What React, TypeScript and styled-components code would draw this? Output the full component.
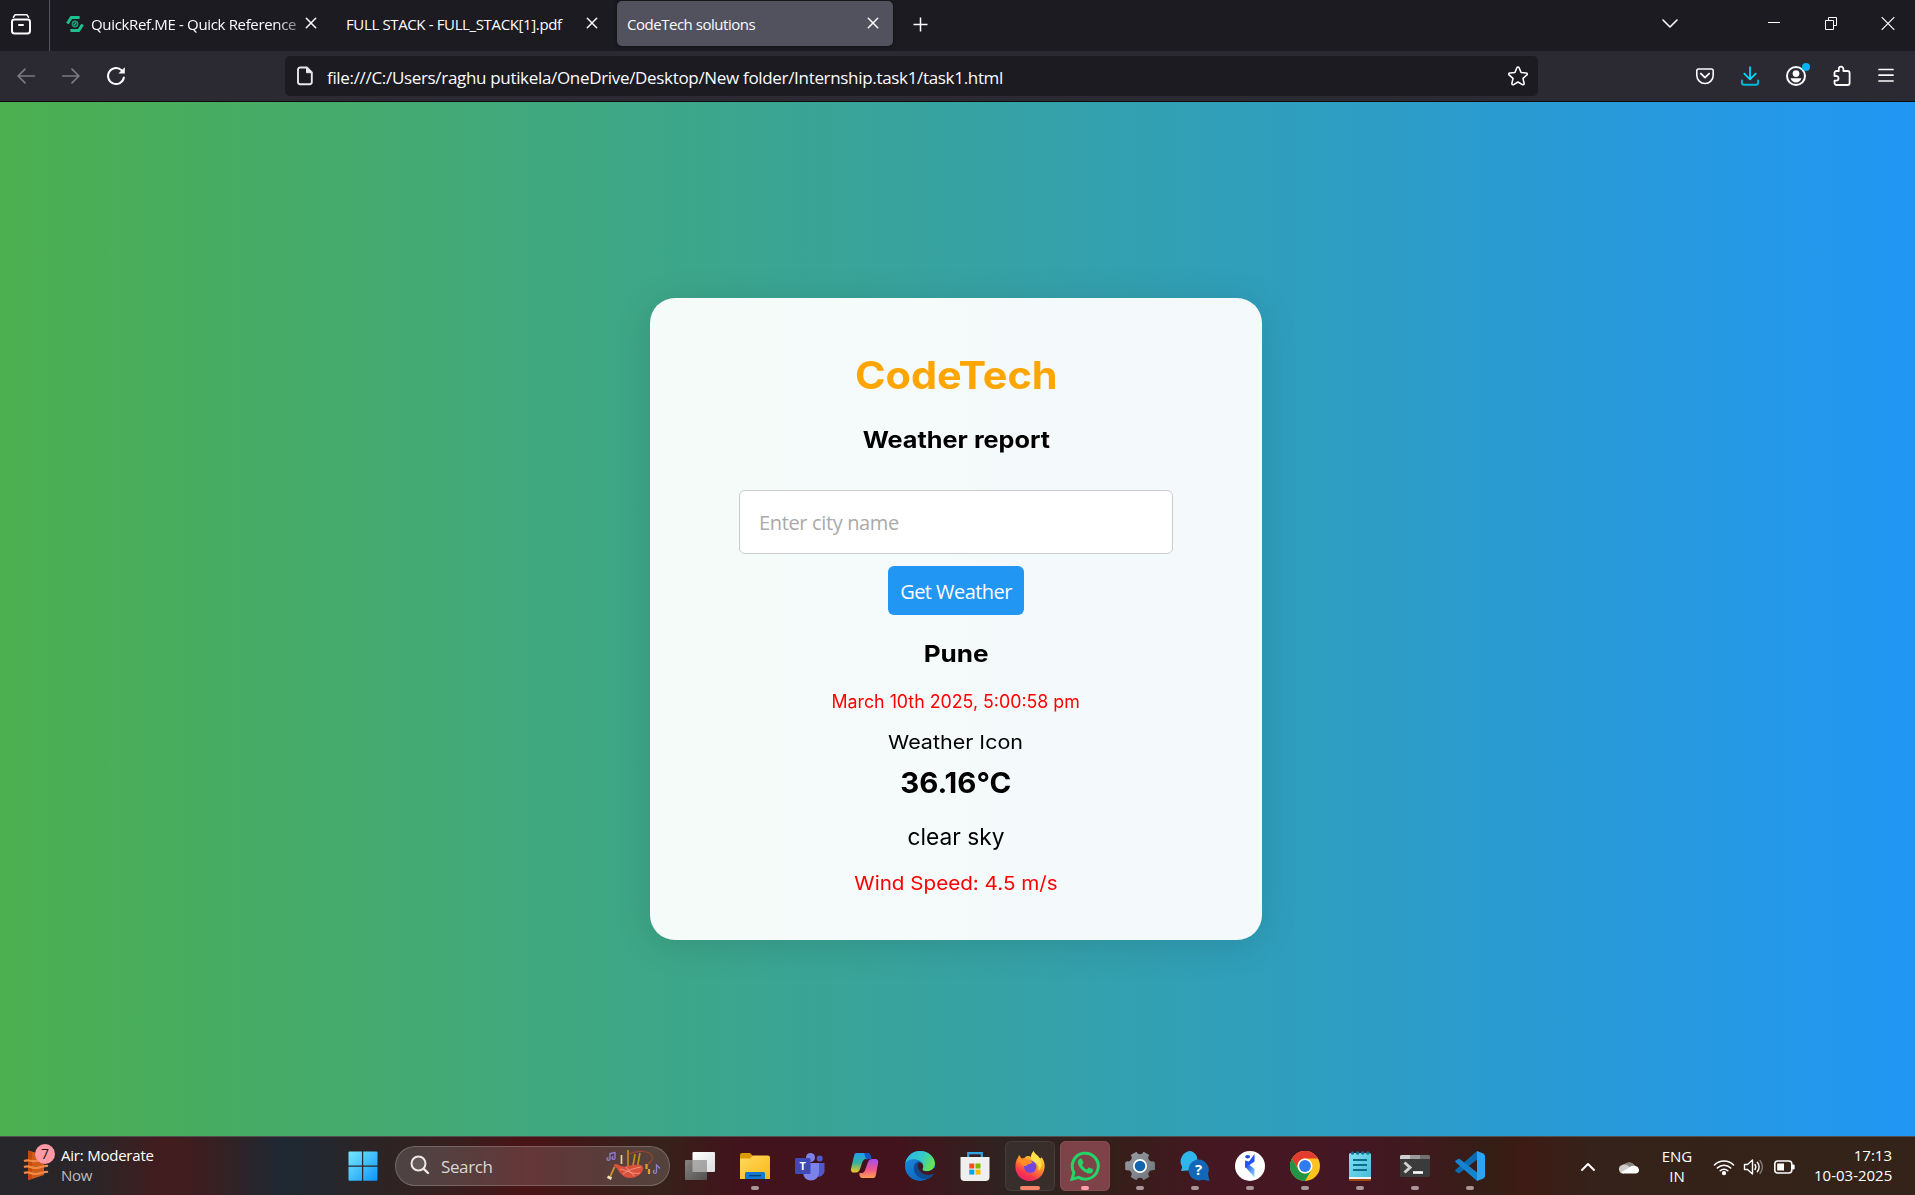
import React from 'react';
import styled, { createGlobalStyle } from 'styled-components';

const GlobalStyle = createGlobalStyle`
  * { box-sizing: border-box; }
  html, body { margin: 0; padding: 0; overflow: hidden; }
  body { font-family: "Open Sans", "Noto Sans", sans-serif; }
  svg { display: block; flex: none; }
  button { font: inherit; border: 0; padding: 0; background: none; color: inherit; }
`;

const Screen = styled.div`
  width: 1915px;
  height: 1195px;
  display: flex;
  flex-direction: column;
  background: #1c1b22;
`;

/* ---------- Browser: tab strip ---------- */

const TabStrip = styled.header`
  height: 51px;
  flex: none;
  display: flex;
  align-items: stretch;
  background: #1c1b22;
  color: #fbfbfe;
`;

const FirefoxView = styled.button`
  width: 50px;
  border-right: 1px solid #54535b;
  padding: 0 0 3px 10px;
`;

const Tab = styled.div<{ $active?: boolean; $width: number; $pad: number; $end?: number }>`
  width: ${(p) => p.$width}px;
  height: 45px;
  margin-top: 1px;
  padding: 0 ${(p) => p.$end ?? 13}px 0 ${(p) => p.$pad}px;
  display: flex;
  align-items: center;
  border-radius: 5px;
  background: ${(p) => (p.$active ? '#52525e' : 'transparent')};
  box-shadow: ${(p) => (p.$active ? '0 0 4px rgba(0, 0, 0, 0.5)' : 'none')};
`;

const TabLabel = styled.span<{ $spacing: number; $fade?: boolean }>`
  flex: 1;
  min-width: 0;
  white-space: nowrap;
  font-size: 15px;
  line-height: 24px;
  letter-spacing: ${(p) => p.$spacing}px;
  mask-image: ${(p) =>
    p.$fade ? 'linear-gradient(90deg, #000 87%, rgba(0,0,0,.35) 98%, transparent)' : 'none'};
`;

const Favicon = styled.span`
  margin-right: 7px;
`;

const CloseTab = styled.button`
  width: 14px;
  height: 14px;
  margin-bottom: 1px;
`;

const NewTab = styled.button`
  margin: 17px 0 0 20px;
  width: 15px;
  height: 15px;
`;

const WindowControls = styled.div`
  margin-left: auto;
  display: flex;
  align-items: flex-start;
  padding: 16px 20px 0 0;
`;

const WindowButton = styled.button<{ $gap: number }>`
  margin-left: ${(p) => p.$gap}px;
`;

/* ---------- Browser: navigation bar ---------- */

const NavBar = styled.nav`
  height: 51px;
  flex: none;
  display: flex;
  align-items: center;
  padding-left: 16px;
  background: #2b2a33;
  border-bottom: 1px solid #0c0c0d;
  color: #fbfbfe;
`;

const NavButtons = styled.div`
  width: 269px;
  display: flex;
  gap: 25px;
`;

const NavButton = styled.button<{ $disabled?: boolean }>`
  color: ${(p) => (p.$disabled ? '#7b7a82' : '#fbfbfe')};
`;

const UrlBar = styled.div`
  width: 1253px;
  height: 40px;
  display: flex;
  align-items: center;
  padding: 0 9px 0 12px;
  border-radius: 5px;
  background: #1c1b22;
`;

const Url = styled.span`
  margin-left: 14px;
  flex: 1;
  white-space: nowrap;
  font-size: 17px;
  line-height: 26px;
  letter-spacing: -0.322px;
  padding-top: 3px;
`;

const Extensions = styled.div`
  flex: 1;
  display: flex;
  justify-content: flex-end;
  gap: 25px;
  padding-right: 20px;
`;

const AccountButton = styled.button`
  position: relative;
`;

const AccountDot = styled.span`
  position: absolute;
  top: -2px;
  right: -3px;
  width: 8px;
  height: 8px;
  border-radius: 50%;
  background: #00b3f4;
`;

/* ---------- Page ---------- */

const Page = styled.main`
  flex: 1;
  min-height: 0;
  display: flex;
  align-items: center;
  justify-content: center;
  padding-right: 3px;
  background: linear-gradient(to right, #4caf50, #2196f3);
`;

const Card = styled.section`
  width: 612px;
  height: 642px;
  padding-top: 53px;
  display: flex;
  flex-direction: column;
  align-items: center;
  border-radius: 25px;
  background: rgba(255, 255, 255, 0.95);
  box-shadow: 0 5px 38px rgba(0, 0, 0, 0.12);
`;

const Line = styled.p<{
  $size: number;
  $height: number;
  $top?: number;
  $stretch?: number;
  $color?: string;
  $bold?: boolean;
}>`
  margin: ${(p) => p.$top ?? 0}px 0 0;
  font-family: Inter, 'Open Sans', sans-serif;
  font-size: ${(p) => p.$size}px;
  line-height: ${(p) => p.$height}px;
  color: ${(p) => p.$color ?? '#000'};
  font-weight: ${(p) => (p.$bold ? 700 : 400)};
  white-space: nowrap;
  transform: scaleX(${(p) => p.$stretch ?? 1});
`;

const CityInput = styled.input`
  width: 434px;
  height: 64px;
  margin-top: 35px;
  padding: 0 19px;
  border: 1px solid #ccc;
  border-radius: 6px;
  background: #fff;
  font-family: 'Open Sans', sans-serif;
  font-size: 20px;
  letter-spacing: -0.355px;
  &::placeholder { color: #aaa; opacity: 1; }
`;

const WeatherButton = styled.button`
  width: 136px;
  height: 49px;
  margin-top: 12px;
  padding-top: 2px;
  border-radius: 6px;
  background: #2196f3;
  color: #fff;
  font-size: 20px;
  letter-spacing: -0.553px;
  white-space: nowrap;
`;

/* ---------- Taskbar ---------- */

const Taskbar = styled.footer`
  height: 59px;
  flex: none;
  display: flex;
  align-items: stretch;
  border-top: 1px solid #554f50;
  color: #fff;
  background: linear-gradient(
    90deg,
    #26262b 0, #2a2528 90px, #431c1e 165px, #3c1e20 200px, #1e2933 285px, #2a2527 360px,
    #35201f 440px, #4a1416 530px, #3e1a18 590px, #36221a 660px, #42131c 740px, #42131c 900px,
    #33201f 980px, #2c2421 1020px, #351f1a 1110px, #451722 1215px, #441724 1350px, #3e1a1d 1430px,
    #341e15 1490px, #3e1b15 1525px, #35221a 1590px, #332318 100%
  );
`;

const Widget = styled.div`
  width: 340px;
  display: flex;
  padding: 6px 0 0 23px;
`;

const WidgetIcon = styled.div`
  position: relative;
  width: 38px;
  height: 46px;
  padding-top: 6px;
`;

const Badge = styled.span`
  position: absolute;
  left: 12px;
  top: 1px;
  width: 20px;
  height: 20px;
  border-radius: 50%;
  background: #ff99a4;
  color: #1a1a1a;
  font-size: 14px;
  line-height: 20px;
  text-align: center;
`;

const WidgetText = styled.div`
  display: flex;
  flex-direction: column;
  padding-top: 2px;
  font-size: 15px;
  line-height: 20px;
  letter-spacing: -0.222px;
`;

const Muted = styled.span`
  color: #c3bcbd;
`;

const StartButton = styled.button`
  width: 55px;
  padding: 0 0 0 8px;
  display: flex;
  align-items: center;
`;

const SearchBox = styled.div`
  width: 275px;
  height: 40px;
  margin: 9px 2px 0 0;
  padding: 0 7px 2px 14px;
  display: flex;
  align-items: center;
  border: 1px solid rgba(255, 255, 255, 0.2);
  border-radius: 20px;
  background: rgba(255, 255, 255, 0.15);
`;

const SearchLabel = styled.span`
  flex: 1;
  margin-left: 11px;
  padding-top: 3px;
  font-size: 17px;
  line-height: 24px;
  letter-spacing: -0.381px;
  color: #ded5d6;
`;

const Apps = styled.div`
  display: flex;
`;

const AppSlot = styled.button<{ $fill?: string; $edge?: string }>`
  width: 50px;
  height: 50px;
  margin: 4px 2px 0 3px;
  padding-top: 10px;
  display: flex;
  flex-direction: column;
  align-items: center;
  gap: 5px;
  border-radius: 6px;
  background: ${(p) => p.$fill ?? 'transparent'};
  box-shadow: inset 0 0 0 1px ${(p) => p.$edge ?? 'transparent'};
`;

const Indicator = styled.span<{ $width: number; $color: string }>`
  width: ${(p) => p.$width}px;
  height: 4px;
  border-radius: 2px;
  background: ${(p) => p.$color};
`;

const Tray = styled.div`
  margin-left: auto;
  display: flex;
  align-items: center;
  padding: 0 23px 2px 0;
`;

const TrayIcon = styled.span<{ $gap: number }>`
  margin-right: ${(p) => p.$gap}px;
  padding-top: 3px;
`;

const TrayText = styled.div<{ $align: string; $width: number; $gap: number; $bottom?: number }>`
  width: ${(p) => p.$width}px;
  margin-right: ${(p) => p.$gap}px;
  display: flex;
  flex-direction: column;
  font-size: 15px;
  line-height: 20px;
  text-align: ${(p) => p.$align};
  white-space: nowrap;
  padding: 1px 0 ${(p) => p.$bottom ?? 0}px;
`;

/* ---------- Icons ---------- */

const CloseIcon = () => (
  <svg width="14" height="14" viewBox="0 0 14 14" stroke="#fbfbfe" strokeWidth="1.5">
    <path d="M2.3 2.3 11.7 11.7M11.7 2.3 2.3 11.7" strokeLinecap="round" />
  </svg>
);

const ViewIcon = () => (
  <svg width="22" height="22" viewBox="0 0 22 22" fill="none" stroke="#fbfbfe" strokeLinecap="round">
    <path d="M5.2 1.7h11.6M3.5 4.2 5 1.8M18.5 4.2 17 1.8" strokeWidth="1.6" />
    <rect x="2" y="6.5" width="18" height="14" rx="2.4" strokeWidth="2" />
    <path d="M9 12h4" strokeWidth="2" />
  </svg>
);

const QuickRefIcon = () => (
  <svg width="18" height="18" viewBox="0 0 18 18" fill="none" stroke="#1fc08e">
    <path d="M1.4 8.500 5.300 2.400h8.300M16.600 9.500l-3.900 6.100H4.400" strokeWidth="3" />
    <circle cx="9" cy="9" r="2.600" strokeWidth="1.600" opacity=".75" />
    <path d="m8 10 2-2" strokeWidth="1.200" />
  </svg>
);

const BackIcon = ({ flip }: { flip?: boolean }) => (
  <svg width="20" height="20" viewBox="0 0 20 20" fill="none" stroke="currentColor" strokeWidth="1.7" strokeLinecap="round" strokeLinejoin="round">
    {flip ? <path d="M1.8 10h16M11 3.2 17.9 10 11 16.8" /> : <path d="M18.2 10h-16M9 3.2 2.1 10 9 16.8" />}
  </svg>
);

const ReloadIcon = () => (
  <svg width="20" height="20" viewBox="0 0 20 20" fill="none" stroke="currentColor" strokeWidth="2" strokeLinecap="round">
    <path d="M17.9 11.5A8 8 0 1 1 15.8 4.4" />
    <path d="M18.8 1.2v6.4h-6.4z" fill="currentColor" stroke="none" />
  </svg>
);

const FileIcon = () => (
  <svg width="16" height="20" viewBox="0 0 16 20" fill="none" stroke="#e8e8ec" strokeWidth="1.9" strokeLinejoin="round">
    <path d="M3.2 1.5h6.6l5 5V16a2.2 2.2 0 0 1-2.2 2.2H3.2A2.2 2.2 0 0 1 1 16V3.700a2.200 2.200 0 0 1 2.200-2.200z" />
    <path d="M9.500 1.500v5.200h5.300z" fill="#e8e8ec" strokeWidth="1" />
  </svg>
);

const StarIcon = () => (
  <svg width="22" height="22" viewBox="0 0 22 22" fill="none" stroke="#fbfbfe" strokeWidth="1.6" strokeLinejoin="round">
    <path d="M11 2c.5 0 .9.300 1.100.8l2 4.700 5.100.5c1 .1 1.400 1.200.7 1.900l-3.900 3.500 1.100 5c.2 1-.8 1.700-1.700 1.200L11 17l-4.400 2.600c-.9.5-1.900-.2-1.700-1.200l1.100-5-3.900-3.500c-.7-.7-.3-1.800.7-1.900l5.100-.5 2-4.700C10.100 2.300 10.500 2 11 2z" />
  </svg>
);

const PocketIcon = () => (
  <svg width="20" height="20" viewBox="0 0 20 20" fill="none" stroke="#fbfbfe" strokeLinecap="round" strokeLinejoin="round">
    <path d="M3.500 3h13A1.700 1.700 0 0 1 18.200 4.700v4.600a8.200 8.200 0 0 1-16.400 0V4.700A1.700 1.700 0 0 1 3.500 3z" strokeWidth="1.600" />
    <path d="M5.900 7.600 10 11.600l4.100-4" strokeWidth="1.900" />
  </svg>
);

const DownloadIcon = () => (
  <svg width="20" height="20" viewBox="0 0 20 20" fill="none" stroke="#00ddff" strokeLinecap="round" strokeLinejoin="round">
    <path d="M10 1v12M4.300 7.700 10 13.400l5.700-5.700" strokeWidth="1.700" />
    <path d="M1.900 14.500v2.200a2 2 0 0 0 2 2h12.200a2 2 0 0 0 2-2v-2.200" strokeWidth="1.900" stroke="#00bcd8" />
  </svg>
);

const AccountIcon = () => (
  <svg width="22" height="22" viewBox="0 0 22 22">
    <circle cx="11" cy="11" r="9" fill="none" stroke="#fbfbfe" strokeWidth="2" />
    <circle cx="11" cy="8.600" r="3.400" fill="#fbfbfe" />
    <path d="M5.600 13.200h10.800c-.6 2.600-2.800 4.300-5.400 4.300s-4.800-1.700-5.400-4.300z" fill="#fbfbfe" />
  </svg>
);

const PuzzleIcon = () => (
  <svg width="20" height="22" viewBox="0 0 20 22" fill="none" stroke="#fbfbfe" strokeWidth="1.800" strokeLinejoin="round">
    <path d="M2.500 11V8a2 2 0 0 1 2-2h2.300V4a2.300 2.300 0 0 1 4.600 0v2h4.200a2 2 0 0 1 2 2v10a2 2 0 0 1-2 2H4.500a2 2 0 0 1-2-2v-2.400h1.700a2.300 2.300 0 0 0 0-4.600z" />
  </svg>
);

const MenuIcon = () => (
  <svg width="18" height="20" viewBox="0 0 18 20" stroke="#fbfbfe" strokeWidth="1.700" strokeLinecap="round">
    <path d="M2 3.500h14M2 9.200h14M2 15h14" />
  </svg>
);

const AirIcon = () => (
  <svg width="28" height="32" viewBox="0 0 28 32">
    <path d="M5 1.500 21 6v20L6 31 5 30z" fill="#d05a17" />
    <path d="M5 1.500 9 3v27l-4 .5z" fill="#c24a0c" />
    <path d="M1 12c5-2 7 1 12 0s8-1 12-1M1 18c5-2 7 1 12 1s8-3 12-2M1 24c5-2 7 1 12 1s8-3 12-2" stroke="#f08a4c" strokeWidth="2.200" fill="none" />
  </svg>
);

const WindowsIcon = () => (
  <svg width="30" height="30" viewBox="0 0 30 30">
    <defs>
      <linearGradient id="win" x1="0" y1="0" x2="30" y2="30" gradientUnits="userSpaceOnUse">
        <stop offset="0" stopColor="#7aeaff" />
        <stop offset="1" stopColor="#0a93f8" />
      </linearGradient>
    </defs>
    <path d="M1.500.5H14v14H.5v-13a1 1 0 0 1 1-1zM15.200.5h13.300a1 1 0 0 1 1 1v13H15.200zM.5 15.700H14v14H1.500a1 1 0 0 1-1-1zM15.200 15.700h14.300v13a1 1 0 0 1-1 1H15.200z" fill="url(#win)" />
  </svg>
);

const SearchIcon = () => (
  <svg width="20" height="20" viewBox="0 0 20 20" fill="none" stroke="#eee8e8" strokeLinecap="round">
    <circle cx="8.500" cy="8.500" r="7" strokeWidth="2" fill="rgba(255,255,255,.12)" />
    <path d="m13.800 13.800 4.200 4.200" strokeWidth="2.400" />
  </svg>
);

const BagpipeIcon = () => (
  <svg width="56" height="32" viewBox="0 0 56 32" fill="none">
    <path d="M4 10V4.500l5-1V9M4 10a1.500 1.300 0 1 1-1.500-1.300M9 9a1.500 1.300 0 1 1-1.500-1.300M50.500 23v-7l3.500 3.500M50.500 23a1.600 1.400 0 1 1-1.600-1.500" stroke="#8f82cf" strokeWidth="1.300" />
    <path d="M23 5C31 1 46 1 46.500 9c0 4-5 5-5.500 8" stroke="#a3442f" strokeWidth="1.100" />
    <path d="M15.500 15V6" stroke="#e8cfa0" strokeWidth="1.700" />
    <path d="M22 17V1M27 17l2-12M31.500 17l2.500-13" stroke="#c98f1d" strokeWidth="1.600" />
    <path d="M7.500 16c1.500-2 4-1 6.500.5 3 2 6 .5 10 0 6-.8 12-2 13 1.500C38 24 31 29 24 29c-6.500 0-10-5-13-9.500-1.300-1.600-2.700-1.500-3.500-3.500z" fill="#d9503d" />
    <path d="M14 20c6 1 14 6 20 4M17 25c5-4 12-6 18-7M20 18l8 9" stroke="#f3a08c" strokeWidth=".8" />
    <path d="M8.500 18 4.500 27" stroke="#d19a2b" strokeWidth="1.800" />
    <path d="M2 26.500 6 28 5 31 1 29z" fill="#f3e2bd" />
    <path d="M40.500 15v5M43 20v5" stroke="#dca22e" strokeWidth="2.200" />
  </svg>
);

const TaskViewIcon = () => (
  <svg width="30" height="30" viewBox="0 0 30 30">
    <defs>
      <linearGradient id="tvw" x1="0" y1="0" x2="1" y2="1"><stop stopColor="#fff" /><stop offset="1" stopColor="#dcdcdc" /></linearGradient>
      <linearGradient id="tvg" x1="0" y1="0" x2="1" y2="1"><stop stopColor="#8d8b8b" /><stop offset="1" stopColor="#555" /></linearGradient>
    </defs>
    <rect x="7.500" y="1" width="22.500" height="20" rx="1" fill="url(#tvw)" />
    <rect x="0" y="9" width="22" height="20" rx="1" fill="url(#tvg)" fillOpacity=".92" />
    <rect x="7.500" y="9" width="14.500" height="12" fill="#b5b5b5" opacity=".75" />
  </svg>
);

const FolderIcon = () => (
  <svg width="30" height="30" viewBox="0 0 30 30">
    <defs><linearGradient id="fold" x1="0" y1="0" x2="1" y2="1"><stop stopColor="#ffd95e" /><stop offset="1" stopColor="#f9b816" /></linearGradient></defs>
    <path d="M0 4a2 2 0 0 1 2-2h8l3 3-2 5H0z" fill="#dc9a05" />
    <path d="M0 7.500h10l3-3h15a2 2 0 0 1 2 2V28H0z" fill="url(#fold)" />
    <path d="M5 28v-5.500A1.500 1.500 0 0 1 6.500 21h17a1.500 1.500 0 0 1 1.500 1.500V28z" fill="#1279cf" />
    <path d="M9 24.700h12" stroke="#073f75" strokeWidth="1.300" />
  </svg>
);

const TeamsGlyph = styled.svg`
  text { font: 700 11px 'Open Sans', sans-serif; }
`;

const TeamsIcon = () => (
  <TeamsGlyph width="30" height="30" viewBox="0 0 30 30">
    <circle cx="24.700" cy="7.500" r="3" fill="#5059c9" />
    <path d="M20 12h9.500v8.500a6 6 0 0 1-9.500 4z" fill="#5059c9" />
    <circle cx="15.500" cy="6.500" r="4.500" fill="#7b83eb" />
    <path d="M8 12h16v9.500a8 8 0 0 1-16 0z" fill="#7b83eb" />
    <rect x="0" y="7" width="15.500" height="16" rx="1.200" fill="#4149b4" />
    <text x="7.700" y="19.200" fill="#fff" textAnchor="middle">T</text>
  </TeamsGlyph>
);

const CopilotIcon = () => (
  <svg width="30" height="30" viewBox="0 0 30 30">
    <defs>
      <linearGradient id="cpa" x1="0" y1="0" x2="0" y2="1"><stop stopColor="#1ea0f2" /><stop offset=".5" stopColor="#35b2a0" /><stop offset="1" stopColor="#f5c51c" /></linearGradient>
      <linearGradient id="cpb" x1="0" y1="0" x2="0" y2="1"><stop stopColor="#a34df0" /><stop offset=".55" stopColor="#f0568c" /><stop offset="1" stopColor="#ffa04f" /></linearGradient>
    </defs>
    <path d="M6.500 2H17c2.500 0 3.500 2 4 4.500l-4 2C15 7 13 9 12 12l-2 6c-.7 2-2 3.500-4 3.500H3.500C1 21.500.5 19 1.200 17L4 5c.5-2 1-3 2.500-3z" fill="url(#cpa)" />
    <path d="M14 2h3.500c2.500 0 3 2 4 6h-4.500c-2 0-2.500-6-3-6z" fill="#1456c4" />
    <path d="M23.500 27H13c-2.500 0-4-2-3.500-5 3 .5 5-.5 6-4l2.500-7c.7-2 2-3 4-3h3.500c2 0 3.200 1.800 2.600 4L26 23.500c-.6 2-1 3.500-2.500 3.500z" fill="url(#cpb)" />
  </svg>
);

const EdgeIcon = () => (
  <svg width="30" height="30" viewBox="0 0 30 30">
    <defs>
      <linearGradient id="eda" x1="0" y1="0" x2="1" y2=".4"><stop stopColor="#2bb4ea" /><stop offset=".6" stopColor="#35c9c8" /><stop offset="1" stopColor="#62e35a" /></linearGradient>
      <linearGradient id="edb" x1="0" y1="0" x2="1" y2="1"><stop stopColor="#1a8fe3" /><stop offset="1" stopColor="#0b58b0" /></linearGradient>
    </defs>
    <circle cx="15" cy="15" r="15" fill="url(#edb)" />
    <path d="M.3 12C2 4.500 8 0 15 0c9 0 15 6.500 15 12.500 0 5-4 7.800-8 7.800-3.500 0-5-1.200-4.500-2.300 2-3.500 0-8.500-6.500-9.500C6 7.800 2 9.500.3 12z" fill="url(#eda)" />
    <path d="M13.500 10.500C9 12 7.500 17 10 22s9 7 14.500 5.200c2-1 3.500-2.500 4.500-5C25 24.500 19 24 16 20.500c-2.700-3-2-7-.5-9.500z" fill="#0f4a92" />
    <path d="M13 12.500c4-3 6.500 2.500 4.500 5.500-.5 1.100 1 2.300 4.500 2.300 3 0 5.500-1.200 7-3.500l1.500 1-1.500 4.700C24 25 18.500 24 15.500 20.500 13.200 18 12 15 13 12.500z" fill="#42181f" />
  </svg>
);

const StoreIcon = () => (
  <svg width="30" height="30" viewBox="0 0 30 30">
    <path d="M8.200 8V2.200h13.600V8" fill="none" stroke="#2fa5e6" strokeWidth="2.200" />
    <path d="M.5 6h29v20a4 4 0 0 1-4 4h-21a4 4 0 0 1-4-4z" fill="#efefef" />
    <path d="M9.300 12.500h5v5h-5z" fill="#f04e24" /><path d="M15.500 12.500h5v5h-5z" fill="#7eb801" />
    <path d="M9.300 18.600h5v5h-5z" fill="#00a3ec" /><path d="M15.500 18.600h5v5h-5z" fill="#fdb800" />
  </svg>
);

const FirefoxIcon = () => (
  <svg width="30" height="30" viewBox="0 0 30 30">
    <defs>
      <linearGradient id="ffa" x1=".8" y1="0" x2=".3" y2="1"><stop stopColor="#fff04a" /><stop offset=".45" stopColor="#ff9727" /><stop offset=".8" stopColor="#fb3550" /><stop offset="1" stopColor="#ef2065" /></linearGradient>
    </defs>
    <path d="M18.500 0c1 3 4 4 6 7 1 .5 1.500 1 1.800-1C29 9 30 13 29.500 17 28.500 25 22 30 15 30S1 25 .5 17C.2 13 1 9 3 6.500L4 4l3 4 3-1.500C12 4 16 5 16.500 7z" fill="url(#ffa)" />
    <path d="M18.500 0c1 3 4 4 6 7 3 5 2.500 10-1 13 1-5-1.500-8-5-9.500C15 9 15 4 18.500 0z" fill="#ffe14a" />
    <circle cx="15.200" cy="15.800" r="6.200" fill="#7446d8" />
    <path d="M3 9c3-2 8-2 11 0 2 1 3 1.500 3.500 2.500-2 2-5 1-6.500 3.500-2 0-5-1-8-6z" fill="#ff8f24" />
  </svg>
);

const WhatsAppIcon = () => (
  <svg width="30" height="30" viewBox="0 0 30 30">
    <path d="M2 28.200 3.900 21.500A13 13 0 1 1 8.700 26.400z" fill="none" stroke="#25d366" strokeWidth="3" strokeLinejoin="miter" />
    <path d="M10.400 7.500c.6-.2 1.300 0 1.600.7l1.300 3c.2.600 0 1-.4 1.500l-1 1.100c1.100 2.200 2.800 3.800 5 4.800l1.300-1.500c.4-.5.9-.6 1.400-.4l2.900 1.400c.6.300.8.700.7 1.300-.3 2-2 3.300-4 3.200C14 22.300 8 16 7.800 11.300c0-1.700 1.200-3.400 2.600-3.800z" fill="#25d366" />
  </svg>
);

const SettingsIcon = () => (
  <svg width="30" height="30" viewBox="0 0 30 30">
    <defs><linearGradient id="gear" x1="0" y1="0" x2="1" y2="1"><stop stopColor="#9a9fa5" /><stop offset="1" stopColor="#6c7278" /></linearGradient></defs>
    <path d="m11 1 .7 0c.8 3 5.800 3 6.600 0h.7l5.300 3-.2.500c-2.300 2.200.3 6.800 3.400 5.800l2.300.9.200 7.500-2.300.5c-3.200-.7-5.800 3.700-3.500 5.800l.2.800L19 29h-.7c-.8-3-5.800-3-6.600 0H11l-5.300-3 .2-.8c2.300-2.200-.3-6.500-3.500-5.800L.2 18.700v-7.500l2.300-.9c3.100 1 5.700-3.600 3.400-5.800L5.700 4z" fill="url(#gear)" />
    <circle cx="15" cy="15" r="7" fill="#fff" /><circle cx="15" cy="15" r="5.300" fill="#1264ae" />
  </svg>
);

const HelpGlyph = styled.svg`
  text { font: 700 15px 'Open Sans', sans-serif; }
`;

const HelpIcon = () => (
  <HelpGlyph width="30" height="30" viewBox="0 0 30 30">
    <path d="M11 0a10.500 10.500 0 0 1 0 19.500H7.500L1 20l1.200-4A10.500 10.500 0 0 1 11 0z" fill="#2fb6ea" />
    <path d="M18.500 8.500A10.500 10.500 0 0 1 28 23l1.500 7-6.500-1.300A10.500 10.500 0 1 1 18.500 8.500z" fill="#1267b8" />
    <text x="18.500" y="24" fill="#fff" textAnchor="middle">?</text>
  </HelpGlyph>
);

const RunnerIcon = () => (
  <svg width="30" height="30" viewBox="0 0 30 30">
    <defs><linearGradient id="run" x1="0" y1="0" x2="1" y2="1"><stop stopColor="#1446f0" /><stop offset="1" stopColor="#9fe0f5" /></linearGradient></defs>
    <circle cx="15" cy="15" r="15" fill="#fff" />
    <ellipse cx="12.600" cy="5.700" rx="2.500" ry="1.800" fill="#2446f2" />
    <path d="M19.500 3v7.500L14.500 14l-4.500 3V9.500l4 1z" fill="#2350fb" />
    <path d="M10 15.500 14.500 14l5 4v8.500z" fill="url(#run)" />
  </svg>
);

const ChromeIcon = () => (
  <svg width="30" height="30" viewBox="0 0 30 30">
    <circle cx="15" cy="15" r="15" fill="#fcc31e" />
    <path d="M2 7.500A15 15 0 0 1 28 7.500H15a7.500 7.500 0 0 0-6.500 11.200z" fill="#e33b2e" />
    <path d="M2 7.500A15 15 0 0 0 15 30l6.500-11.300a7.500 7.500 0 0 1-13 0z" fill="#229446" />
    <circle cx="15" cy="15" r="7.500" fill="#fff" /><circle cx="15" cy="15" r="5.900" fill="#2f7bef" />
  </svg>
);

const NotepadIcon = () => (
  <svg width="30" height="30" viewBox="0 0 30 30">
    <defs><linearGradient id="note" x1="0" y1="0" x2="1" y2="1"><stop stopColor="#83e2f3" /><stop offset="1" stopColor="#45bdd8" /></linearGradient></defs>
    <path d="M4 27.500h22V30H4z" fill="#a44a10" /><path d="M4 25h22v3H4z" fill="#f4f4f4" />
    <path d="M4 3.500A1.500 1.500 0 0 1 5.500 2h19A1.500 1.500 0 0 1 26 3.500V26H4z" fill="url(#note)" />
    <path d="M8 9h14M8 14h14M8 19h14" stroke="#0d6d8c" strokeWidth="1.800" />
    <g fill="#126e8e"><circle cx="7.500" cy="2" r="1.700" /><circle cx="12.600" cy="2" r="1.700" /><circle cx="17.700" cy="2" r="1.700" /><circle cx="22.800" cy="2" r="1.700" /></g>
  </svg>
);

const TerminalIcon = () => (
  <svg width="30" height="30" viewBox="0 0 30 30">
    <rect x="0" y="4" width="30" height="22" rx="1.500" fill="#3b3b3b" />
    <path d="M0 8V5.500A1.500 1.500 0 0 1 1.500 4H10v4z" fill="#cfcfcf" /><path d="M10 4h10v4H10z" fill="#9c9c9c" /><path d="M20 4h8.500A1.500 1.500 0 0 1 30 5.500V8H20z" fill="#707070" />
    <path d="m4.500 11.500 5.500 5-5.500 5" fill="none" stroke="#d0d0d0" strokeWidth="3" />
    <path d="M13 21.500h10" stroke="#fff" strokeWidth="2.600" />
  </svg>
);

const CodeIcon = () => (
  <svg width="30" height="30" viewBox="0 0 30 30">
    <path d="m22 0 1.500 7.500L4 22.500.3 20.300V19z" fill="#0b6cb5" />
    <path d="M.3 11v-1.300L4 7.500l19.500 15L22 30z" fill="#1583cf" />
    <path d="m22 0 6.500 2.500L30 4.500v21l-1.500 2L22 30z" fill="#2aa4f4" />
  </svg>
);

const CloudIcon = () => (
  <svg width="22" height="16" viewBox="0 0 22 16">
    <path d="M4 9a7 7 0 0 1 13-2l-4 5z" fill="#8c8682" />
    <path d="M5 14.500a4.300 4.300 0 0 1-1-8.400c2-1 5-.4 7 1.500l6 4z" fill="#cfccc9" />
    <path d="M3 13.500 12 8c3-2.500 9-1 9 3a3.300 3.300 0 0 1-3.500 3.500H5z" fill="#fff" />
  </svg>
);

const WifiIcon = () => (
  <svg width="22" height="18" viewBox="0 0 22 18" fill="none" stroke="#fff" strokeWidth="1.500" strokeLinecap="round">
    <path d="M1.500 7a13.500 13.500 0 0 1 19 0M4.300 10a9.500 9.500 0 0 1 13.400 0M7.200 12.800a5.400 5.400 0 0 1 7.600 0" />
    <circle cx="11" cy="15.200" r="1.400" fill="#fff" />
  </svg>
);

const VolumeIcon = () => (
  <svg width="22" height="18" viewBox="0 0 22 18" fill="none" stroke="#fff" strokeWidth="1.400" strokeLinecap="round" strokeLinejoin="round">
    <path d="M1.500 6.500h3l5-4.500v14l-5-4.500h-3z" />
    <path d="M12 6.500c1 1.500 1 3.500 0 5M14.300 4.300c2.400 2.700 2.400 6.700 0 9.400" />
    <path d="M17 2.500c3 4 3 9 0 13" stroke="#837a75" />
  </svg>
);

const BatteryIcon = () => (
  <svg width="22" height="16" viewBox="0 0 22 16">
    <rect x="1.800" y="2" width="17" height="12" rx="3" fill="none" stroke="#fff" strokeWidth="1.600" />
    <path d="M4.200 4.500h6.800v7H4.200z" fill="#fff" /><path d="M19.500 6h1.600v4h-1.600z" fill="#fff" stroke="#fff" />
  </svg>
);

/* ---------- Data ---------- */

type TaskApp = { name: string; Icon: () => React.JSX.Element; dot?: [number, string]; fill?: string; edge?: string };

const idle: [number, string] = [8, '#a99598'];

const apps: TaskApp[] = [
  { name: 'taskview', Icon: TaskViewIcon },
  { name: 'explorer', Icon: FolderIcon, dot: idle },
  { name: 'teams', Icon: TeamsIcon },
  { name: 'copilot', Icon: CopilotIcon },
  { name: 'edge', Icon: EdgeIcon },
  { name: 'store', Icon: StoreIcon },
  { name: 'firefox', Icon: FirefoxIcon, dot: [20, '#f5846a'], fill: 'rgba(255,255,255,.05)', edge: 'rgba(255,255,255,.08)' },
  { name: 'whatsapp', Icon: WhatsAppIcon, dot: [8, '#ff9faa'], fill: '#7e4349', edge: '#864b50' },
  { name: 'settings', Icon: SettingsIcon, dot: idle },
  { name: 'help', Icon: HelpIcon, dot: idle },
  { name: 'runner', Icon: RunnerIcon, dot: idle },
  { name: 'chrome', Icon: ChromeIcon, dot: idle },
  { name: 'notepad', Icon: NotepadIcon, dot: idle },
  { name: 'terminal', Icon: TerminalIcon, dot: idle },
  { name: 'code', Icon: CodeIcon, dot: idle },
];

export default function App() {
  return (
    <Screen>
      <GlobalStyle />

      <TabStrip>
        <FirefoxView><ViewIcon /></FirefoxView>
        <Tab $width={281} $pad={16}>
          <Favicon><QuickRefIcon /></Favicon>
          <TabLabel $spacing={-0.341} $fade>QuickRef.ME - Quick Reference</TabLabel>
          <CloseTab><CloseIcon /></CloseTab>
        </Tab>
        <Tab $width={286} $pad={15} $end={18}>
          <TabLabel $spacing={-0.367}>FULL STACK - FULL_STACK[1].pdf</TabLabel>
          <CloseTab><CloseIcon /></CloseTab>
        </Tab>
        <Tab $width={276} $pad={10} $active>
          <TabLabel $spacing={-0.474}>CodeTech solutions</TabLabel>
          <CloseTab><CloseIcon /></CloseTab>
        </Tab>
        <NewTab>
          <svg width="15" height="15" viewBox="0 0 15 15" stroke="#fbfbfe" strokeWidth="1.500"><path d="M7.500 .5v14M.5 7.500h14" /></svg>
        </NewTab>
        <WindowControls>
          <WindowButton $gap={0}>
            <svg width="16" height="14" viewBox="0 0 16 14" fill="none" stroke="#fbfbfe" strokeWidth="1.600" strokeLinecap="round" strokeLinejoin="round"><path d="M1 4l7 7 7-7" /></svg>
          </WindowButton>
          <WindowButton $gap={90}>
            <svg width="12" height="14" viewBox="0 0 12 14" stroke="#fff"><path d="M0 6.500h12" /></svg>
          </WindowButton>
          <WindowButton $gap={45}>
            <svg width="12" height="14" viewBox="0 0 12 14" fill="none" stroke="#fff"><path d="M.5 4.500h8v9h-8zM3.500 4.500v-3h8v8h-3" /></svg>
          </WindowButton>
          <WindowButton $gap={44}>
            <svg width="14" height="14" viewBox="0 0 14 14" stroke="#fff" strokeWidth="1.200"><path d="M.7 1.200 13.300 13.800M13.300 1.200.7 13.800" /></svg>
          </WindowButton>
        </WindowControls>
      </TabStrip>

      <NavBar>
        <NavButtons>
          <NavButton $disabled><BackIcon /></NavButton>
          <NavButton $disabled><BackIcon flip /></NavButton>
          <NavButton><ReloadIcon /></NavButton>
        </NavButtons>
        <UrlBar>
          <FileIcon />
          <Url>file:///C:/Users/raghu putikela/OneDrive/Desktop/New folder/Internship.task1/task1.html</Url>
          <StarIcon />
        </UrlBar>
        <Extensions>
          <NavButton><PocketIcon /></NavButton>
          <NavButton><DownloadIcon /></NavButton>
          <AccountButton><AccountIcon /><AccountDot /></AccountButton>
          <NavButton><PuzzleIcon /></NavButton>
          <NavButton><MenuIcon /></NavButton>
        </Extensions>
      </NavBar>

      <Page>
        <Card>
          <Line as="h1" $size={38.5} $height={48} $stretch={1.075} $color="#ffa500" $bold>CodeTech</Line>
          <Line as="h3" $size={23} $height={30} $top={26} $stretch={1.098} $bold>Weather report</Line>
          <CityInput placeholder="Enter city name" />
          <WeatherButton>Get Weather</WeatherButton>
          <Line as="h3" $size={23.4} $height={30} $top={24} $stretch={1.115} $bold>Pune</Line>
          <Line $size={18} $height={24} $top={21} $stretch={0.988} $color="#f00">March 10th 2025, 5:00:58 pm</Line>
          <Line $size={19.3} $height={24} $top={16} $stretch={1.115}>Weather Icon</Line>
          <Line $size={29} $height={36} $top={11} $stretch={1.015} $bold>36.16°C</Line>
          <Line $size={23} $height={30} $top={21} $stretch={0.988}>clear sky</Line>
          <Line $size={19.3} $height={24} $top={19} $stretch={1.07} $color="#f00">Wind Speed: 4.5 m/s</Line>
        </Card>
      </Page>

      <Taskbar>
        <Widget>
          <WidgetIcon><AirIcon /><Badge>7</Badge></WidgetIcon>
          <WidgetText><span>Air: Moderate</span><Muted>Now</Muted></WidgetText>
        </Widget>
        <StartButton><WindowsIcon /></StartButton>
        <SearchBox>
          <SearchIcon />
          <SearchLabel>Search</SearchLabel>
          <BagpipeIcon />
        </SearchBox>
        <Apps>
          {apps.map(({ name, Icon, dot, fill, edge }) => (
            <AppSlot key={name} $fill={fill} $edge={edge}>
              <Icon />
              {dot && <Indicator $width={dot[0]} $color={dot[1]} />}
            </AppSlot>
          ))}
        </Apps>
        <Tray>
          <TrayIcon $gap={22}>
            <svg width="16" height="10" viewBox="0 0 16 10" fill="none" stroke="#fff" strokeWidth="2" strokeLinecap="round" strokeLinejoin="round"><path d="M2 8l6-6 6 6" /></svg>
          </TrayIcon>
          <TrayIcon $gap={19}><CloudIcon /></TrayIcon>
          <TrayText $align="center" $width={36} $gap={18}><span>ENG</span><span>IN</span></TrayText>
          <TrayIcon $gap={8}><WifiIcon /></TrayIcon>
          <TrayIcon $gap={8}><VolumeIcon /></TrayIcon>
          <TrayIcon $gap={19}><BatteryIcon /></TrayIcon>
          <TrayText $align="right" $width={78} $gap={0} $bottom={2}><span>17:13</span><span>10-03-2025</span></TrayText>
        </Tray>
      </Taskbar>
    </Screen>
  );
}
